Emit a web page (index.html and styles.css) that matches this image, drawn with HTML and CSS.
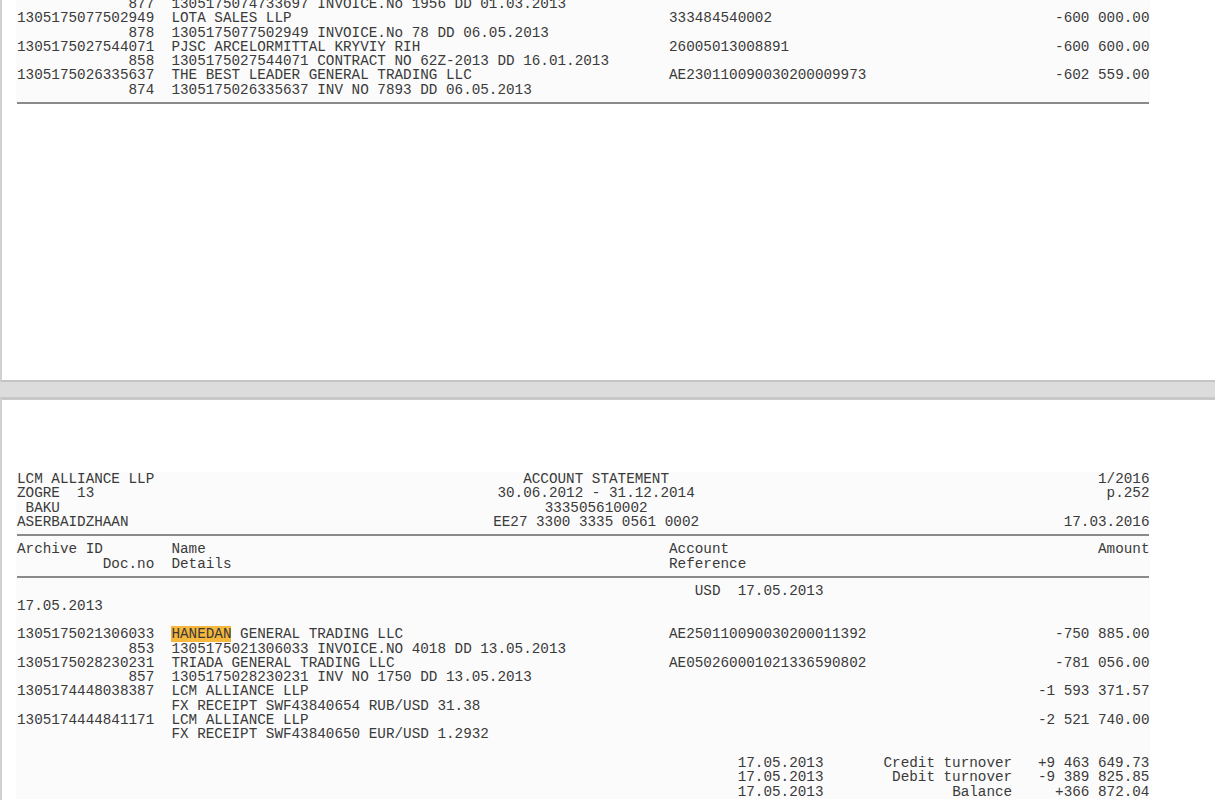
FILE: index.html
```html
<!DOCTYPE html>
<html lang="en">
<head>
  <meta charset="UTF-8" />
  <title>Account Statement</title>
  <meta name="viewport" content="width=device-width, initial-scale=1.0" />
  <link rel="stylesheet" href="styles.css">
</head>
<body>
  <!-- previous page, scrolled so only its tail is visible -->
  <div class="page page-prev">
    <div class="sheet sheet-tail">
      <div class="tx">
        <span class="id">877</span><span class="name">1305175074733697 INVOICE.No 1956 DD 01.03.2013</span><span></span><span></span>
      </div>
      <div class="tx">
        <span class="id">1305175077502949</span><span class="name">LOTA SALES LLP</span><span>333484540002</span><span class="amt">-600 000.00</span>
        <span class="id">878</span><span class="name">1305175077502949 INVOICE.No 78 DD 06.05.2013</span><span></span><span></span>
      </div>
      <div class="tx">
        <span class="id">1305175027544071</span><span class="name">PJSC ARCELORMITTAL KRYVIY RIH</span><span>26005013008891</span><span class="amt">-600 600.00</span>
        <span class="id">858</span><span class="name">1305175027544071 CONTRACT NO 62Z-2013 DD 16.01.2013</span><span></span><span></span>
      </div>
      <div class="tx">
        <span class="id">1305175026335637</span><span class="name">THE BEST LEADER GENERAL TRADING LLC</span><span>AE230110090030200009973</span><span class="amt">-602 559.00</span>
        <span class="id">874</span><span class="name">1305175026335637 INV NO 7893 DD 06.05.2013</span><span></span><span></span>
      </div>
      <div class="rule"></div>
    </div>
  </div>

  <div class="page page-next">
    <div class="sheet">
      <div class="head">
        <span>LCM ALLIANCE LLP</span><span class="mid">ACCOUNT STATEMENT</span><span class="right">1/2016</span>
        <span>ZOGRE  13</span><span class="mid">30.06.2012 - 31.12.2014</span><span class="right">p.252</span>
        <span> BAKU</span><span class="mid">333505610002</span><span class="right"></span>
        <span>ASERBAIDZHAAN</span><span class="mid">EE27 3300 3335 0561 0002</span><span class="right">17.03.2016</span>
      </div>
      <div class="rule"></div>
      <div class="tx">
        <span>Archive ID</span><span class="name">Name</span><span>Account</span><span class="amt">Amount</span>
        <span class="id">Doc.no</span><span class="name">Details</span><span>Reference</span><span></span>
      </div>
      <div class="rule"></div>
      <div class="currency">USD  17.05.2013</div>
      <div class="line">17.05.2013</div>
      <div class="line"> </div>

      <div class="tx">
        <span class="id">1305175021306033</span><span class="name"><mark class="hit">HANEDAN</mark> GENERAL TRADING LLC</span><span>AE250110090030200011392</span><span class="amt">-750 885.00</span>
        <span class="id">853</span><span class="name">1305175021306033 INVOICE.NO 4018 DD 13.05.2013</span><span></span><span></span>
      </div>
      <div class="tx">
        <span class="id">1305175028230231</span><span class="name">TRIADA GENERAL TRADING LLC</span><span>AE050260001021336590802</span><span class="amt">-781 056.00</span>
        <span class="id">857</span><span class="name">1305175028230231 INV NO 1750 DD 13.05.2013</span><span></span><span></span>
      </div>
      <div class="tx">
        <span class="id">1305174448038387</span><span class="name">LCM ALLIANCE LLP</span><span></span><span class="amt">-1 593 371.57</span>
        <span class="id"></span><span class="name">FX RECEIPT SWF43840654 RUB/USD 31.38</span><span></span><span></span>
      </div>
      <div class="tx">
        <span class="id">1305174444841171</span><span class="name">LCM ALLIANCE LLP</span><span></span><span class="amt">-2 521 740.00</span>
        <span class="id"></span><span class="name">FX RECEIPT SWF43840650 EUR/USD 1.2932</span><span></span><span></span>
      </div>
      <div class="line"> </div>

      <div class="totals">
        <span></span><span>17.05.2013</span><span class="right">Credit turnover</span><span class="right">+9 463 649.73</span>
        <span></span><span>17.05.2013</span><span class="right">Debit turnover</span><span class="right">-9 389 825.85</span>
        <span></span><span>17.05.2013</span><span class="right">Balance</span><span class="right">+366 872.04</span>
      </div>
    </div>
  </div>
</body>
</html>
```

FILE: styles.css
```css
* {
  box-sizing: border-box;
  margin: 0;
  padding: 0;
}

body {
  background: #dcdcdc;
  height: 800px;
  overflow: hidden;
  font-family: 'Liberation Mono', 'Courier New', monospace;
  font-size: 14.3px;
  line-height: 14.3px;
  color: #3a3a3a;
}

.page {
  display: flow-root;
  background: #ffffff;
  border-left: 2px solid #d0d0d0;
}

.page-prev {
  height: 382px;
  border-bottom: 2px solid #c4c4c4;
  margin-bottom: 15px;
}

.page-next {
  border-top: 3px solid #c8c8c8;
  padding-top: 72px;
  height: 420px;
}

.sheet {
  background: #fbfbfb;
  margin-left: 14px;
  padding: 0 1px;
  width: calc(132ch + 2px);
}

.sheet-tail {
  margin-top: -3px;
}

.sheet span,
.line,
.currency {
  white-space: pre;
  height: 14.3px;
}

.head {
  display: grid;
  grid-template-columns: 50ch 35ch 1fr;
}

.head .mid {
  text-align: center;
}

.right {
  text-align: right;
}

.rule {
  height: 7px;
  border-bottom: 2px solid #8a8a8a;
  margin-bottom: 6.3px;
}

.tx {
  display: grid;
  grid-template-columns: 16ch 60ch 1fr auto;
}

.tx .id {
  text-align: right;
}

.tx .name {
  padding-left: 2ch;
}

.tx .amt {
  text-align: right;
}

.currency {
  padding-left: 79ch;
}

.hit {
  background: #f5b73c;
  color: #3a3a3a;
}

.totals {
  display: grid;
  grid-template-columns: 84ch 10ch 22ch 16ch;
}
```
